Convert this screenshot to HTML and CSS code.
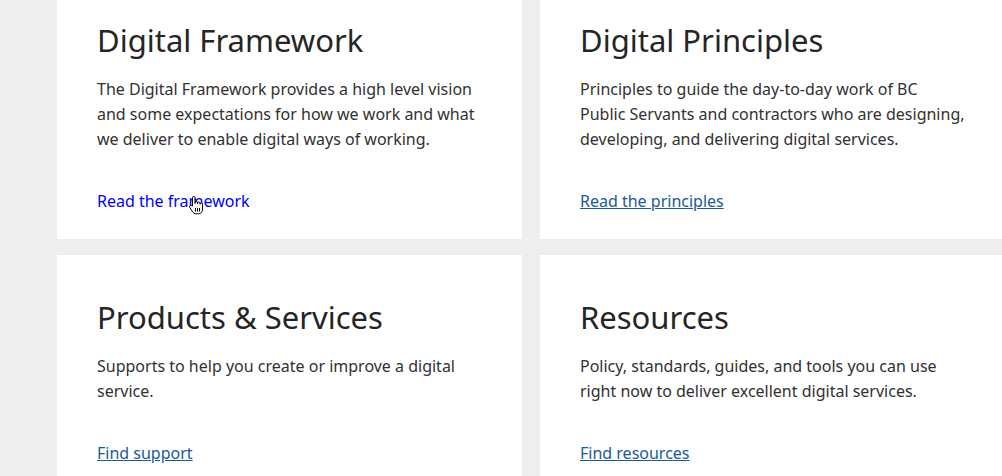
FILE: index.html
```html
<!DOCTYPE html>
<html lang="en">
<head>
<meta charset="utf-8">
<title>Digital</title>
<link rel="stylesheet" href="styles.css">
</head>
<body>
<main class="grid">
  <section class="card">
    <h2 class="card-title">Digital Framework</h2>
    <p class="card-text">The Digital Framework provides a high level vision and some expectations for how we work and what we deliver to enable digital ways of working.</p>
    <p class="card-link-wrap"><a class="card-link is-hover" href="#">Read the framework</a><svg class="cursor" width="17" height="21" viewBox="0 0 17 20" aria-hidden="true"><path d="M4.5 10.5V2.2a1.25 1.25 0 0 1 2.5 0V8V7.3a1.25 1.25 0 0 1 2.5 0V8.2V7.8a1.25 1.25 0 0 1 2.5 0V8.8V8.6a1.25 1.25 0 0 1 2.5 0V13.5c0 2.8-1.5 4.8-4 4.8H8.2c-1.8 0-2.8-0.8-3.8-2.3L1.6 11.6a1.2 1.2 0 0 1 2-1.3Z" fill="#fff" stroke="#000" stroke-width="1" stroke-linejoin="round"/><path d="M7.5 12.5v3.5M9.5 12.5v3.5M11.5 12.5v3.5" stroke="#000" stroke-width="1"/></svg></p>
  </section>
  <section class="card">
    <h2 class="card-title">Digital Principles</h2>
    <p class="card-text">Principles to guide the day-to-day work of BC Public Servants and contractors who are designing, developing, and delivering digital services.</p>
    <p class="card-link-wrap"><a class="card-link" href="#">Read the principles</a></p>
  </section>
  <section class="card">
    <h2 class="card-title">Products &amp; Services</h2>
    <p class="card-text">Supports to help you create or improve a digital service.</p>
    <p class="card-link-wrap"><a class="card-link" href="#">Find support</a></p>
  </section>
  <section class="card">
    <h2 class="card-title">Resources</h2>
    <p class="card-text">Policy, standards, guides, and tools you can use right now to deliver excellent digital services.</p>
    <p class="card-link-wrap"><a class="card-link" href="#">Find resources</a></p>
  </section>
</main>
</body>
</html>
```
FILE: styles.css
```css
html, body {
  margin: 0;
  padding: 0;
}
body {
  background: #eeeeee;
  font-family: "Noto Sans", "DejaVu Sans", sans-serif;
  color: #313132;
  overflow: hidden;
  width: 1002px;
  height: 476px;
}
.grid {
  display: grid;
  grid-template-columns: 465px 465px;
  column-gap: 18px;
  row-gap: 16px;
  margin: -22px 0 0 57px;
}
.card {
  background: #ffffff;
  padding: 43px 40px 25px;
  display: flex;
  flex-direction: column;
}
.card-title {
  font-size: 31px;
  font-weight: 400;
  line-height: 38px;
  margin: 0 0 18px;
  color: #252526;
}
.card-text {
  font-size: 16px;
  line-height: 25px;
  margin: 0 0 37px;
}
.card-link-wrap {
  position: relative;
  font-size: 16px;
  line-height: 25px;
  margin: 0;
}
.card-link {
  color: #1a5a96;
  text-decoration: underline;
}
.card-link.is-hover {
  color: #0000ff;
  text-decoration: none;
}
.cursor {
  position: absolute;
  left: 91px;
  top: 6px;
}
```
